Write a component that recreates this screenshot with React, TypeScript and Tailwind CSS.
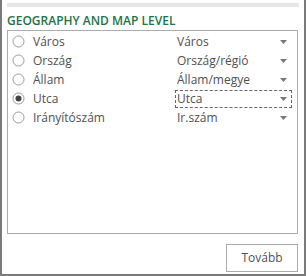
import React from "react";

const rows = [
  { label: "Város", value: "Város", checked: false },
  { label: "Ország", value: "Ország/régió", checked: false },
  { label: "Állam", value: "Állam/megye", checked: false },
  { label: "Utca", value: "Utca", checked: true },
  { label: "Irányítószám", value: "Ir.szám", checked: false },
];

function Radio({ checked }: { checked: boolean }) {
  return (
    <svg width="13" height="13" viewBox="0 0 13 13" className="shrink-0">
      <circle cx="6.5" cy="6.5" r="5.5" fill="white" stroke="#9a9a9a" strokeWidth="1" />
      {checked && <circle cx="6.5" cy="6.5" r="3" fill="#444" />}
    </svg>
  );
}

function Caret() {
  return (
    <svg width="7" height="4" viewBox="0 0 7 4" className="shrink-0">
      <path d="M0 0 H7 L3.5 4 Z" fill="#777" />
    </svg>
  );
}

export default function App() {
  return (
    <div
      className="w-[306px] h-[276px] bg-white border-x-2 border-b-2 border-[#7a7a7a] flex flex-col text-[#505050]"
      style={{ fontFamily: '"Open Sans", "Noto Sans", sans-serif' }}
    >
      <div className="mt-[3px] mx-[5px] h-[4px] bg-[#e6e6e6]" />
      <div className="ml-[5px] mt-[6px] h-[16px] leading-[16px] text-[12px] font-semibold text-[#217346]">
        GEOGRAPHY AND MAP LEVEL
      </div>
      <div className="ml-[5px] mr-[6px] mt-[1px] h-[204px] border border-[#ababab] pt-[1px]">
        {rows.map((r) => (
          <div key={r.label} className="flex items-center h-[19px]">
            <div className="pl-[4px] flex">
              <Radio checked={r.checked} />
            </div>
            <div className="ml-[8px] w-[142px] text-[12px] leading-[19px] whitespace-nowrap">{r.label}</div>
            <div
              className={
                "flex items-center justify-between w-[117px] h-[18px] pl-[1px] pr-[4px] text-[12px] leading-[16px] " +
                (r.checked ? "border border-dashed border-[#666]" : "border border-transparent")
              }
            >
              <span className="whitespace-nowrap">{r.value}</span>
              <Caret />
            </div>
          </div>
        ))}
      </div>
      <div className="flex justify-end mr-[6px] mt-[10px]">
        <div className="w-[72px] h-[28px] border border-[#ababab] flex items-center justify-center text-[12px]">
          Tovább
        </div>
      </div>
    </div>
  );
}
